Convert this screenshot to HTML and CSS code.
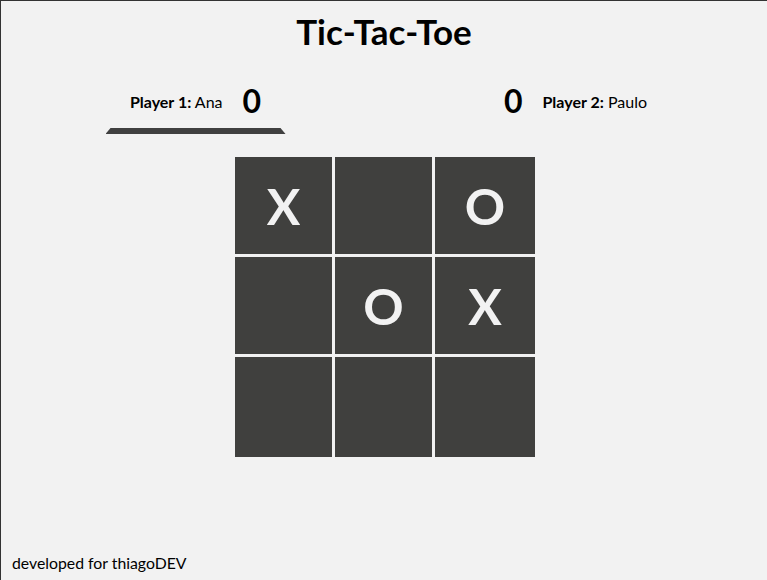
FILE: index.html
```html
<!DOCTYPE html>
<html lang="en">
<head>
<meta charset="utf-8">
<title>Tic-Tac-Toe</title>
<link rel="stylesheet" href="styles.css">
</head>
<body>
<div class="page">
  <h1 class="title">Tic-Tac-Toe</h1>
  <div class="players">
    <div class="player active">
      <span class="name"><b>Player 1:</b> Ana</span>
      <span class="score">0</span>
      <div class="indicator"></div>
    </div>
    <div class="player">
      <span class="score">0</span>
      <span class="name"><b>Player 2:</b> Paulo</span>
    </div>
  </div>
  <div class="board">
    <div class="cell">X</div>
    <div class="cell"></div>
    <div class="cell">O</div>
    <div class="cell"></div>
    <div class="cell">O</div>
    <div class="cell">X</div>
    <div class="cell"></div>
    <div class="cell"></div>
    <div class="cell"></div>
  </div>
  <footer class="footer">developed for thiagoDEV</footer>
</div>
</body>
</html>
```
FILE: styles.css
```css
* { box-sizing: border-box; }
html, body { margin: 0; padding: 0; }
body {
  background: #f2f2f2;
  font-family: Lato, "Open Sans", sans-serif;
  color: #000;
}
.page {
  height: 580px;
  border-top: 1px solid #333;
  border-left: 1px solid #333;
  display: flex;
  flex-direction: column;
  align-items: center;
}
.title {
  margin: 9px 0 0;
  font-size: 35px;
  font-weight: 700;
  line-height: 42px;
}
.players {
  width: 100%;
  display: flex;
  margin-top: 29px;
}
.player {
  width: 50%;
  display: flex;
  justify-content: center;
  align-items: center;
  gap: 20px;
  position: relative;
  height: 40px;
}
.player.active { padding-left: 6px; }
.name { font-size: 16px; }
.name b { font-weight: 700; }
.score { font-size: 32px; font-weight: 700; line-height: 40px; }
.indicator {
  position: absolute;
  left: 50%;
  top: 47px;
  width: 180px;
  height: 6px;
  margin-left: -87px;
  background: #404040;
  clip-path: polygon(5px 0, 175px 0, 180px 100%, 0 100%);
}
.board {
  margin-top: 36px;
  width: 300px;
  height: 300px;
  display: grid;
  grid-template-columns: repeat(3, 100px);
  grid-template-rows: repeat(3, 100px);
  margin-left: 2px;
}
.cell {
  background: #40403e;
  color: #f2f2f2;
  font-size: 50px;
  font-weight: 700;
  display: flex;
  align-items: center;
  justify-content: center;
  border-right: 3px solid #f2f2f2;
  border-bottom: 3px solid #f2f2f2;
  line-height: 1;
}
.cell:nth-child(3n) { border-right: none; }
.cell:nth-child(n+7) { border-bottom: none; }
.footer {
  margin-top: auto;
  align-self: flex-start;
  padding: 0 0 8px 11px;
  font-size: 15.8px;
}
```
